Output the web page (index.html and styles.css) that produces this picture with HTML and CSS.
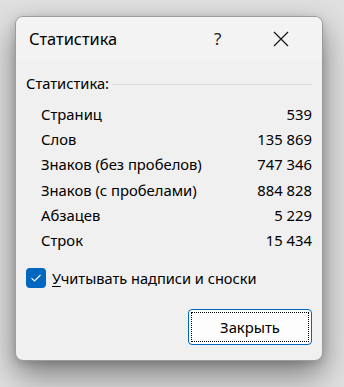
FILE: index.html
```html
<!DOCTYPE html>
<html lang="ru">
<head>
    <meta charset="UTF-8">
    <meta name="viewport" content="width=device-width, initial-scale=1.0">
    <title>Статистика</title>
    <link rel="stylesheet" href="styles.css">
</head>
<body>
    <div class="dialog">
        <div class="titlebar">
            <span class="title">Статистика</span>
            <span class="help">?</span>
            <span class="close">
                <svg width="16" height="16" viewBox="0 0 16 16"><path d="M1 1 L15 15 M15 1 L1 15" stroke="#1a1a1a" stroke-width="1.3" fill="none"/></svg>
            </span>
        </div>
        <div class="content">
            <div class="group-title"><span>Статистика:</span><span class="rule"></span></div>
            <div class="stats">
                <div class="row"><span>Страниц</span><span>539</span></div>
                <div class="row"><span>Слов</span><span>135 869</span></div>
                <div class="row"><span>Знаков (без пробелов)</span><span>747 346</span></div>
                <div class="row"><span>Знаков (с пробелами)</span><span>884 828</span></div>
                <div class="row"><span>Абзацев</span><span>5 229</span></div>
                <div class="row"><span>Строк</span><span>15 434</span></div>
            </div>
            <label class="check">
                <span class="box">
                    <svg width="12" height="10" viewBox="0 0 12 10"><path d="M1.5 5.2 L4.5 8 L10.5 2" stroke="#fff" stroke-width="1.1" fill="none"/></svg>
                </span>
                <span><u>У</u>читывать надписи и сноски</span>
            </label>
            <div class="actions">
                <button class="btn"><span class="focus">Закрыть</span></button>
            </div>
        </div>
    </div>
</body>
</html>
```

FILE: styles.css
```css
body {
    margin: 0;
    width: 344px;
    height: 387px;
    background: #e0e0e0;
    font-family: "Noto Sans", "Open Sans", sans-serif;
    color: #000;
    overflow: hidden;
}
.dialog {
    margin: 16px 0 0 15px;
    width: 306px;
    height: 343px;
    border: 1px solid #9c9c9c;
    border-radius: 8px;
    background: #f0f0f0;
    box-shadow: 0 14px 32px rgba(0, 0, 0, 0.45), 0 2px 8px rgba(0, 0, 0, 0.15);
    overflow: hidden;
}
.titlebar {
    height: 43px;
    background: #f3f3f3;
    display: flex;
    align-items: center;
    padding-left: 13px;
}
.title {
    font-size: 16.4px;
    width: 185px;
}
.help {
    font-size: 17px;
    color: #222;
    width: 59px;
}
.close {
    display: flex;
    padding-top: 1px;
}
.content {
    padding: 13px 10px 0 10px;
}
.group-title {
    display: flex;
    align-items: center;
    font-size: 14.7px;
    line-height: 20px;
}
.rule {
    flex: 1;
    height: 1px;
    background: #dadada;
    margin: 2px 0 0 3px;
}
.stats {
    padding: 9px 0 0 15px;
}
.row {
    display: flex;
    justify-content: space-between;
    font-size: 14.8px;
    line-height: 25.2px;
}
.check {
    display: flex;
    align-items: center;
    gap: 6px;
    font-size: 14.6px;
    margin-top: 15px;
}
.box {
    width: 20px;
    height: 20px;
    border-radius: 4px;
    background: #0067c0;
    display: flex;
    align-items: center;
    justify-content: center;
}
.check u {
    text-decoration-thickness: 1px;
    text-underline-offset: 2px;
}
.actions {
    display: flex;
    justify-content: flex-end;
    margin-top: 21px;
}
.btn {
    width: 124px;
    height: 36px;
    padding: 2px;
    border: 1px solid #0067c0;
    border-radius: 4px;
    background: #fdfdfd;
    font-family: inherit;
    font-size: 14.8px;
    box-shadow: inset 0 0 0 1px #fdfdfd;
}
.focus {
    display: flex;
    align-items: center;
    justify-content: center;
    height: 100%;
    border: 1px dotted #000;
    box-sizing: border-box;
}
```
